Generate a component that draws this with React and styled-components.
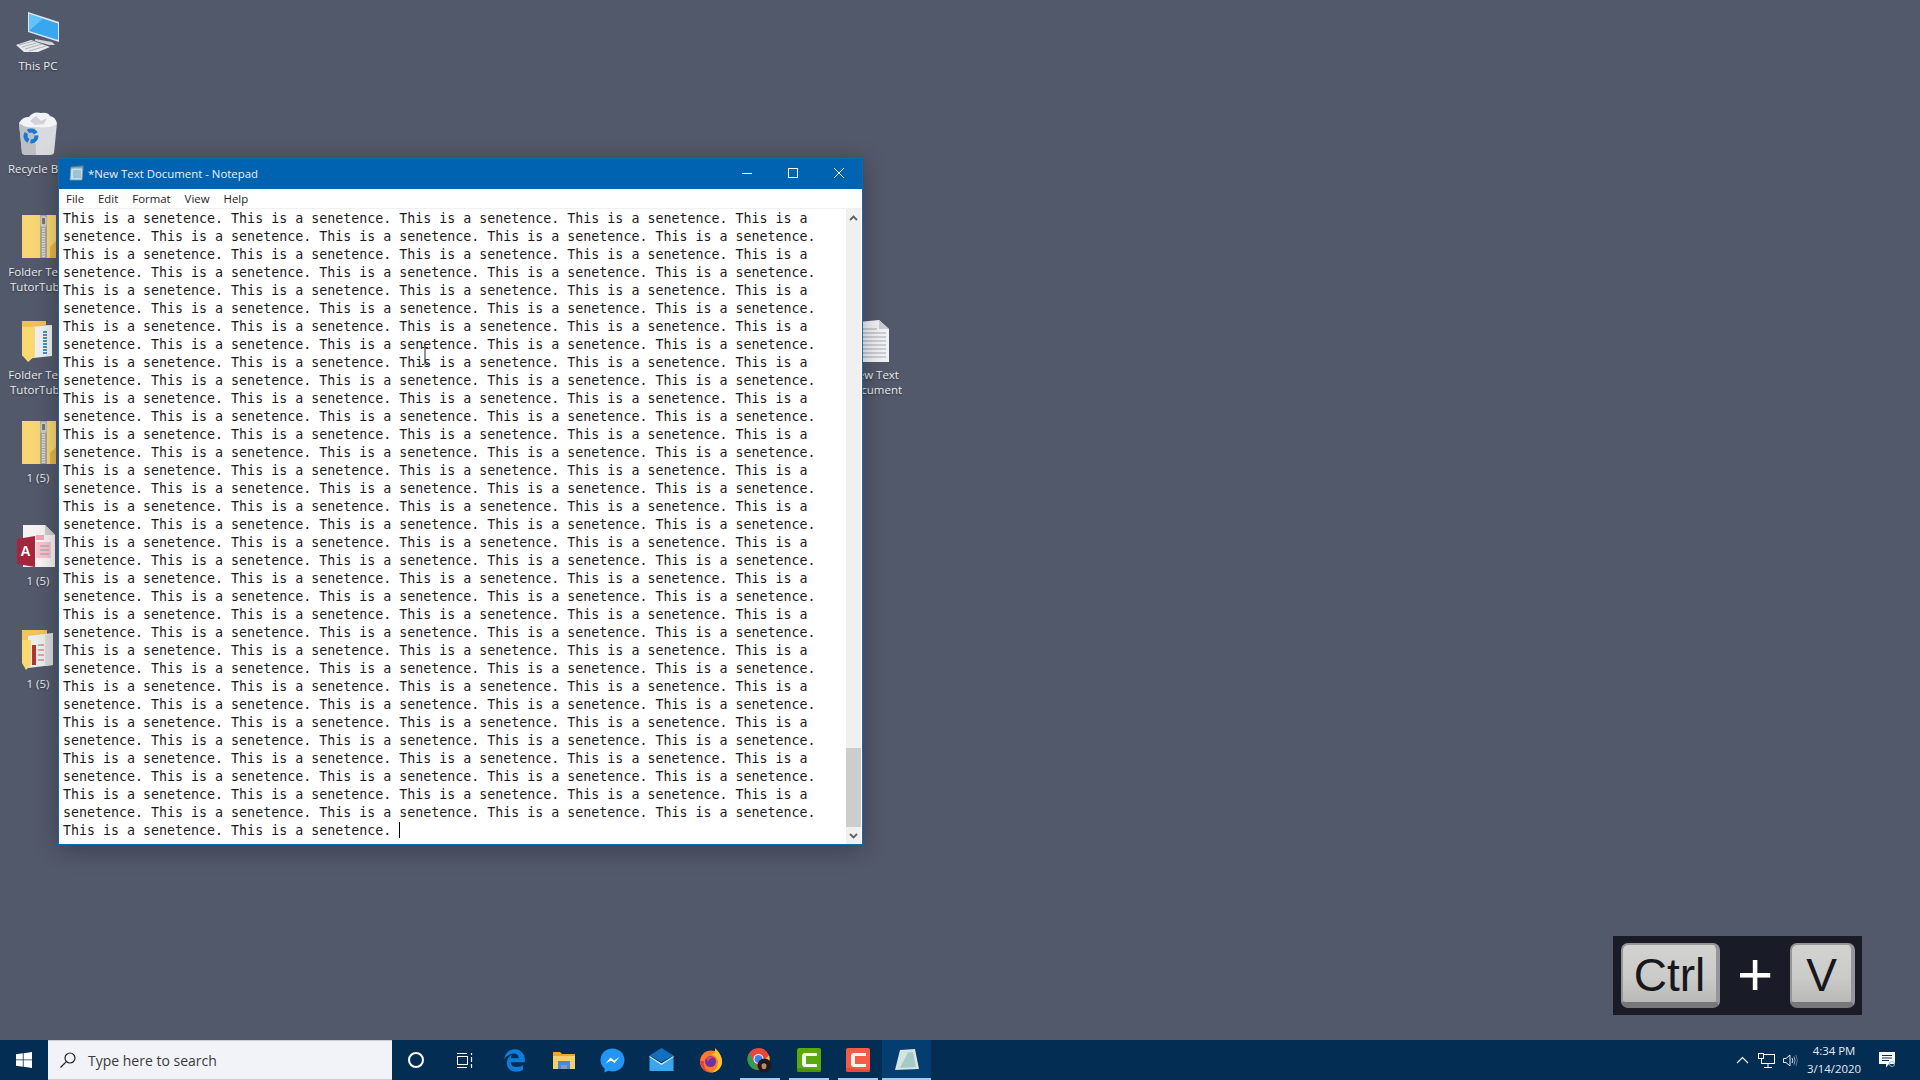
import React from 'react'
import styled, { createGlobalStyle } from 'styled-components'
import { FaEdgeLegacy } from 'react-icons/fa6'

const SENTENCE_LINES = Array.from({ length: 34 }, (_, i) =>
    i % 2 === 0
        ? 'This is a senetence. This is a senetence. This is a senetence. This is a senetence. This is a'
        : 'senetence. This is a senetence. This is a senetence. This is a senetence. This is a senetence.'
)

const ThisPcIcon = () => (
    <svg width="48" height="48" viewBox="0 0 48 48">
        <path d="M14 3 L45 13 L45 33 L14 23 Z" fill="#dfe8f0" />
        <path d="M15 5 L44 14.500 L44 31 L15 22 Z" fill="#38a6f0" />
        <path d="M15 5 L29 9.500 L15 22 Z" fill="#62c4fb" />
        <path d="M21 30 L38 33 L41 36 L35 36 L21 32 Z" fill="#cfd5da" />
        <path d="M2 36 L17 31 L36 38 L24 43 L10 43 Z" fill="#e6e9ed" />
        <path d="M5 36 L20 32 M8 38 L24 33.500 M11 40 L28 35 M15 42 L32 37" stroke="#a5acb5" strokeWidth="0.900" />
    </svg>
)

const RecycleIcon = () => (
    <svg width="48" height="48" viewBox="0 0 48 48">
        <path d="M5 11 L43 11 L40 41 Q39 43 36 43 L13 43 Q9 43 8 41 Z" fill="#d8dadd" />
        <path d="M5 11 L21 11 L22 43 L13 43 Q9 43 8 41 Z" fill="#bcc0c6" />
        <path d="M5 11 Q9 4 15 5 Q19 -1 27 1 Q34 0 36 4 Q42 5 43 12 Q34 17 24 15 Q12 17 5 11 Z" fill="#f1f3f5" />
        <path d="M16 9 L22 4 L27 9 L33 6 L30 12 L21 13 Z" fill="#cfd3d9" />
        <circle cx="17" cy="24" r="5.500" fill="none" stroke="#1878d2" strokeWidth="4" strokeDasharray="9 2" />
    </svg>
)

const ZipFolderIcon = () => (
    <svg width="48" height="48" viewBox="0 0 48 48">
        <path d="M8 0 L42 0 L42 43 L8 43 Z" fill="#f7d673" />
        <path d="M36 32 L36 43 L42 43 L42 26 Z" fill="#e3b649" />
        <rect x="26" y="0" width="7" height="43" fill="#a8a79e" />
        <path d="M29.500 8 L29.500 43" stroke="#dcdad0" strokeWidth="3" strokeDasharray="1.500 1" />
        <rect x="26.500" y="1" width="6" height="11" rx="2" fill="#c9cac9" />
        <rect x="28" y="3" width="3" height="6" fill="#77766f" />
    </svg>
)

const DocFolderIcon = () => (
    <svg width="48" height="48" viewBox="0 0 48 48">
        <path d="M8 3 L32 3 L32 7 L38 7 L38 38 L8 38 Z" fill="#eec15a" />
        <path d="M19 9 L38 7 L38 38 L19 40 Z" fill="#eef1f3" />
        <path d="M31 13 L31 36" stroke="#4b8fc0" strokeWidth="4" strokeDasharray="2 1" />
        <path d="M8 9 L21 9 L21 38 L14 44 L8 37 Z" fill="#fbd970" />
    </svg>
)

const AccessIcon = () => (
    <svg width="48" height="48" viewBox="0 0 48 48">
        <path d="M9 1 L31 1 L41 11 L41 43 L9 43 Z" fill="#f6f3f3" />
        <path d="M31 1 L41 11 L31 11 Z" fill="#d1cdcd" />
        <rect x="22" y="11" width="8" height="5" fill="#f0a6b8" />
        <rect x="22" y="18" width="15" height="16" fill="#f7c4cf" />
        <path d="M26 22 L35 22 M26 26 L35 26 M26 30 L35 30" stroke="#9c9ea4" strokeWidth="1.200" />
        <path d="M3 15 L21 12 L21 43 L3 40 Z" fill="#a4263c" />
        <text x="6.500" y="32" fill="#fff" fontFamily="Liberation Sans, sans-serif" fontWeight="700" fontSize="14">A</text>
    </svg>
)

const MixedFolderIcon = () => (
    <svg width="48" height="48" viewBox="0 0 48 48">
        <path d="M8 3 L33 3 L33 8 L37 8 L37 36 L8 36 Z" fill="#efc55c" />
        <path d="M14 9 L39 6 L39 38 L14 41 Z" fill="#eceded" />
        <path d="M31 8 L39 7 L39 38 L31 39 Z" fill="#dcdcdc" />
        <rect x="18" y="18" width="4" height="20" fill="#b43434" />
        <path d="M24 18 L30 18 M24 23 L30 23 M24 28 L30 28 M24 33 L30 33" stroke="#dba7a7" strokeWidth="2.200" />
        <path d="M8 13 L17 13 L17 38 L12 43 L8 36 Z" fill="#fbd970" />
    </svg>
)

const TextFileIcon = () => (
    <svg width="32" height="44" viewBox="0 0 32 44">
        <path d="M0 2 L21 0 L31 9 L31 42 L0 42 Z" fill="#f0f2f5" />
        <path d="M21 0 L31 9 L21 9 Z" fill="#c9cdd2" />
        <path d="M3 9 L19 9 M3 13 L28 13 M3 17 L28 17 M3 21 L28 21 M3 25 L28 25 M3 29 L28 29 M3 33 L28 33 M3 37 L28 37" stroke="#a5a9af" strokeWidth="1" />
    </svg>
)

const NotepadSmallIcon = () => (
    <svg width="15" height="16" viewBox="0 0 15 16">
        <path d="M2 2 L14 1 L13 15 L1 15 Z" fill="#bfe0ee" stroke="#7c9aa8" strokeWidth="0.800" />
        <path d="M3 1 L3 3.500 M5 1 L5 3.500 M7 1 L7 3.500 M9 1 L9 3.500 M11 1 L11 3.500 M13 1 L13 3.500" stroke="#4a5c68" strokeWidth="0.900" />
        <path d="M4 6 L12 6 M4 8 L12 8 M4 10 L12 10 M4 12 L12 12" stroke="#6f98ad" strokeWidth="0.800" />
    </svg>
)

const MinimizeGlyph = () => (
    <svg width="10" height="10" viewBox="0 0 10 10">
        <path d="M0 5.500 L10 5.500" stroke="#fff" strokeWidth="1" />
    </svg>
)

const MaximizeGlyph = () => (
    <svg width="10" height="10" viewBox="0 0 10 10">
        <rect x="0.500" y="0.500" width="9" height="9" fill="none" stroke="#fff" strokeWidth="1" />
    </svg>
)

const CloseGlyph = () => (
    <svg width="10" height="10" viewBox="0 0 10 10">
        <path d="M0 0 L10 10 M10 0 L0 10" stroke="#fff" strokeWidth="1" />
    </svg>
)

const Chevron = ({ up }) => (
    <svg width="9" height="6" viewBox="0 0 9 6">
        <path d={up ? 'M1 5 L4.500 1.500 L8 5' : 'M1 1 L4.500 4.500 L8 1'} fill="none" stroke="#606060" strokeWidth="1.800" />
    </svg>
)

const WindowsLogo = () => (
    <svg width="16" height="16" viewBox="0 0 16 16">
        <path d="M0 2.200 L6.800 1.300 L6.800 7.500 L0 7.500 Z M7.600 1.200 L16 0 L16 7.500 L7.600 7.500 Z M0 8.300 L6.800 8.300 L6.800 14.700 L0 13.800 Z M7.600 8.300 L16 8.300 L16 16 L7.600 14.800 Z" fill="#fff" />
    </svg>
)

const SearchGlyph = () => (
    <svg width="16" height="16" viewBox="0 0 16 16">
        <circle cx="10" cy="6" r="5" fill="none" stroke="#222" strokeWidth="1.200" />
        <path d="M6.300 9.700 L0.500 15.500" stroke="#222" strokeWidth="1.200" />
    </svg>
)

const TaskViewGlyph = () => (
    <svg width="17" height="15" viewBox="0 0 17 15">
        <path d="M1 0.500 L11 0.500 M1 14.500 L11 14.500" stroke="#fff" strokeWidth="1" />
        <rect x="1.500" y="3.500" width="10" height="8" fill="none" stroke="#fff" strokeWidth="1" />
        <path d="M15.500 0 L15.500 2 M15.500 4 L15.500 9 M15.500 11 L15.500 15" stroke="#fff" strokeWidth="1.200" />
    </svg>
)

const ExplorerIcon = () => (
    <svg width="22" height="20" viewBox="0 0 22 20">
        <path d="M0 2 L7 2 L9 4 L22 4 L22 7 L0 7 Z" fill="#e9a92e" />
        <rect y="6" width="22" height="13" fill="#f7d06a" />
        <path d="M5 19 L5 11 L17 11 L17 19 L14 19 L14 15 L8 15 L8 19 Z" fill="#3e8fd3" />
        <rect x="8" y="15" width="6" height="4" fill="#8e9aa8" />
    </svg>
)

const MessengerIcon = () => (
    <svg width="25" height="25" viewBox="0 0 25 25">
        <path d="M12.500 0.500 C5.700 0.500 0.500 5.500 0.500 12 C0.500 15.500 2 18.500 4.500 20.500 L4.500 24.500 L8.300 22.700 C9.600 23.200 11 23.500 12.500 23.500 C19.300 23.500 24.500 18.500 24.500 12 C24.500 5.500 19.300 0.500 12.500 0.500 Z" fill="#2396f5" />
        <path d="M5.500 15.500 L10.500 9.500 L14 12.500 L19.500 9 L14.500 15 L11 12.500 Z" fill="#fff" />
    </svg>
)

const MailIcon = () => (
    <svg width="25" height="24" viewBox="0 0 25 24">
        <path d="M0.500 7.500 L12.500 0 L24.500 7.500 L12.500 14 Z" fill="#1170bd" />
        <path d="M0.500 8 L12.500 15.500 L24.500 8 L24.500 23 L0.500 23 Z" fill="#3aa6ec" />
        <path d="M0.500 8 L12.500 15.500 L24.500 8 L24.500 9 L12.500 17 L0.500 9 Z" fill="#d8eefb" />
    </svg>
)

const FirefoxIcon = () => (
    <svg width="24" height="26" viewBox="0 0 24 26">
        <circle cx="12" cy="14.500" r="11" fill="#ff7a29" />
        <path d="M12 25.500 C18 25.500 23 20.500 23 14.500 C23 9 20 5 16 1 C16.500 5 15 7 12 8 C16 8 19 11 19 15 C19 20 15 25 12 25.500 Z" fill="#ffc42e" />
        <circle cx="11.500" cy="14.500" r="5.500" fill="#6b32a8" />
        <path d="M7 11 C9 9 13 9 15 10.500 C12 10.500 10 12 9 15 Z" fill="#e8445a" />
        <path d="M1 14 C2 21 7 25.500 12 25.500 C7 24 4 20 5 14 Z" fill="#f0374c" />
    </svg>
)

const ChromeIcon = () => (
    <svg width="26" height="26" viewBox="0 0 26 26">
        <circle cx="11.500" cy="12" r="11" fill="#e8483b" />
        <path d="M2 6.500 L7 15 L11.500 23 A11 11 0 0 1 2 6.500 Z" fill="#2ba14b" />
        <path d="M11.500 23 L17 13 L22 8.500 A11 11 0 0 1 11.500 23 Z" fill="#f7c52e" />
        <circle cx="11.500" cy="12" r="5" fill="#fff" />
        <circle cx="11.500" cy="12" r="4" fill="#3e82ee" />
        <circle cx="17.500" cy="18.500" r="7" fill="#1d1a20" />
        <ellipse cx="17" cy="19" rx="2.400" ry="3.200" fill="#b98a72" />
        <path d="M14 17 Q17 12.500 20.500 17 Q17 15.500 14 17 Z" fill="#050505" />
    </svg>
)

const CamtasiaIcon = ({ $color, $dark }) => (
    <svg width="24" height="24" viewBox="0 0 24 24">
        <rect width="24" height="24" rx="2" fill={$color} />
        <path d="M20 5 L7 5 L5 7 L5 17 L7 19 L20 19 L20 16 L9 16 L9 8 L20 8 Z" fill="#f4f7ef" />
        <path d="M0 20 L0 22 Q0 24 2 24 L22 24 Q24 24 24 22 Z" fill={$dark} />
    </svg>
)

const NotepadIcon = () => (
    <svg width="24" height="24" viewBox="0 0 24 24">
        <path d="M5 2 L20 1 L24 21 L0 22 Z" fill="#d9e4e6" />
        <path d="M7 5 L18 4 L21 19 L3 20 Z" fill="#a5c9c4" />
        <path d="M7 5 L13 4.500 L5 20 L3 20 Z" fill="#d3e6e2" />
    </svg>
)

const TrayCaret = () => (
    <svg width="13" height="8" viewBox="0 0 13 8">
        <path d="M1 7 L6.500 1.500 L12 7" fill="none" stroke="#fff" strokeWidth="1.100" />
    </svg>
)

const NetworkGlyph = () => (
    <svg width="17" height="15" viewBox="0 0 17 15">
        <rect x="3.500" y="1.500" width="13" height="9" fill="none" stroke="#fff" />
        <rect x="0.500" y="0.500" width="5" height="5" fill="#0a3159" stroke="#fff" />
        <path d="M10 11 L10 14 M6 14.500 L14 14.500" stroke="#fff" />
    </svg>
)

const VolumeGlyph = () => (
    <svg width="15" height="13" viewBox="0 0 15 13">
        <path d="M0.500 4.500 L3 4.500 L7 1 L7 12 L3 8.500 L0.500 8.500 Z" fill="none" stroke="#fff" strokeWidth="0.900" />
        <path d="M9 4 Q10.500 6.500 9 9" fill="none" stroke="#fff" strokeWidth="0.900" />
        <path d="M11 2.500 Q13 6.500 11 10.500" fill="none" stroke="#c6d3df" strokeWidth="0.800" />
        <path d="M13 1 Q15.500 6.500 13 12" fill="none" stroke="#6e86a0" strokeWidth="0.800" />
    </svg>
)

const NotificationGlyph = () => (
    <svg width="17" height="16" viewBox="0 0 17 16">
        <path d="M0 0 L16 0 L16 12 L10 12 L7 15.500 L7 12 L0 12 Z" fill="#fff" />
        <path d="M3 3.500 L13 3.500 M3 6 L13 6 M3 8.500 L10 8.500" stroke="#0a3159" />
        <circle cx="13" cy="12" r="2.500" fill="none" stroke="#9ab2c8" />
    </svg>
)

const IBeam = () => (
    <svg width="8" height="18" viewBox="0 0 8 18">
        <path d="M1 0.500 L3 0.500 L4 1.500 L5 0.500 L7 0.500 M4 1.500 L4 16.500 M1 17.500 L3 17.500 L4 16.500 L5 17.500 L7 17.500" fill="none" stroke="#222" />
    </svg>
)

const desktopItems = [
    { label: ['This PC'], icon: <ThisPcIcon /> },
    { label: ['Recycle Bin'], icon: <RecycleIcon /> },
    { label: ['Folder Test', 'TutorTube'], icon: <ZipFolderIcon /> },
    { label: ['Folder Test', 'TutorTube'], icon: <DocFolderIcon /> },
    { label: ['1 (5)'], icon: <ZipFolderIcon /> },
    { label: ['1 (5)'], icon: <AccessIcon /> },
    { label: ['1 (5)'], icon: <MixedFolderIcon /> },
]

const taskbarApps = [
    { key: 'edge', icon: <FaEdgeLegacy size={23} color="#0f7dd8" /> },
    { key: 'explorer', icon: <ExplorerIcon /> },
    { key: 'messenger', icon: <MessengerIcon /> },
    { key: 'mail', icon: <MailIcon /> },
    { key: 'firefox', icon: <FirefoxIcon /> },
    { key: 'chrome', icon: <ChromeIcon />, running: true },
    { key: 'camtasia', icon: <CamtasiaIcon $color="#5aa90e" $dark="#4a920a" />, running: true },
    { key: 'recorder', icon: <CamtasiaIcon $color="#f55b46" $dark="#e24c38" />, running: true },
    { key: 'notepad', icon: <NotepadIcon />, running: true, active: true },
]

const App = () => (
    <>
        <GlobalStyle />
        <Screen>
            <Desktop>
                <IconColumn>
                    {desktopItems.map((item, index) => (
                        <DesktopIcon key={index}>
                            <IconSlot>{item.icon}</IconSlot>
                            {item.label.map(line => (
                                <IconLabel key={line}>{line}</IconLabel>
                            ))}
                        </DesktopIcon>
                    ))}
                </IconColumn>

                <FreeIcon>
                    <IconSlot>
                        <TextFileIcon />
                    </IconSlot>
                    <IconLabel>New Text</IconLabel>
                    <IconLabel>Document</IconLabel>
                </FreeIcon>

                <NotepadWindow>
                    <TitleBar>
                        <NotepadSmallIcon />
                        <TitleText>*New Text Document - Notepad</TitleText>
                        <WindowButton>
                            <MinimizeGlyph />
                        </WindowButton>
                        <WindowButton>
                            <MaximizeGlyph />
                        </WindowButton>
                        <WindowButton>
                            <CloseGlyph />
                        </WindowButton>
                    </TitleBar>
                    <MenuBar>
                        <MenuItem>File</MenuItem>
                        <MenuItem>Edit</MenuItem>
                        <MenuItem>Format</MenuItem>
                        <MenuItem>View</MenuItem>
                        <MenuItem>Help</MenuItem>
                    </MenuBar>
                    <EditorArea>
                        <Editor>
                            {SENTENCE_LINES.map((line, index) => (
                                <EditorLine key={index}>{line}</EditorLine>
                            ))}
                            <EditorLine>
                                This is a senetence. This is a senetence. <Caret />
                            </EditorLine>
                            <MousePointer>
                                <IBeam />
                            </MousePointer>
                        </Editor>
                        <ScrollBar>
                            <ScrollArrow>
                                <Chevron up />
                            </ScrollArrow>
                            <ScrollTrack>
                                <ScrollThumb />
                            </ScrollTrack>
                            <ScrollArrow>
                                <Chevron />
                            </ScrollArrow>
                        </ScrollBar>
                    </EditorArea>
                </NotepadWindow>

                <KeyOverlay>
                    <KeyCap $wide>Ctrl</KeyCap>
                    <PlusSign>+</PlusSign>
                    <KeyCap>V</KeyCap>
                </KeyOverlay>
            </Desktop>

            <Taskbar>
                <StartButton>
                    <WindowsLogo />
                </StartButton>
                <SearchBox>
                    <SearchGlyph />
                    <SearchText>Type here to search</SearchText>
                </SearchBox>
                <ShellButton>
                    <CortanaRing />
                </ShellButton>
                <ShellButton>
                    <TaskViewGlyph />
                </ShellButton>
                <AppStrip>
                    {taskbarApps.map(app => (
                        <AppButton key={app.key} $running={app.running} $active={app.active}>
                            {app.icon}
                        </AppButton>
                    ))}
                </AppStrip>
                <Tray>
                    <TrayIcon>
                        <TrayCaret />
                    </TrayIcon>
                    <TrayIcon>
                        <NetworkGlyph />
                    </TrayIcon>
                    <TrayIcon>
                        <VolumeGlyph />
                    </TrayIcon>
                    <Clock>
                        <span>4:34 PM</span>
                        <span>3/14/2020</span>
                    </Clock>
                    <NotificationButton>
                        <NotificationGlyph />
                    </NotificationButton>
                </Tray>
            </Taskbar>
        </Screen>
    </>
)

const GlobalStyle = createGlobalStyle`
    html, body {
        margin: 0;
        padding: 0;
        background: #52596b;
        overflow: hidden;
    }
`

const Screen = styled.div`
    width: 1920px;
    height: 1080px;
    display: flex;
    flex-direction: column;
    font-family: 'Open Sans', 'Noto Sans', sans-serif;
    overflow: hidden;
`

const Desktop = styled.div`
    position: relative;
    flex: 1;
    background: #52596b;
`

const IconColumn = styled.div`
    width: 76px;
    display: flex;
    flex-direction: column;
    padding-top: 9px;
`

const DesktopIcon = styled.div`
    height: 103px;
    display: flex;
    flex-direction: column;
    align-items: center;
`

const FreeIcon = styled(DesktopIcon)`
    position: absolute;
    left: 836px;
    top: 318px;
    width: 76px;
`

const IconSlot = styled.div`
    height: 48px;
    display: flex;
    align-items: center;
    justify-content: center;
    margin-bottom: 2px;
`

const IconLabel = styled.div`
    font-size: 11.500px;
    line-height: 14.500px;
    color: #e9ebef;
    white-space: nowrap;
    text-shadow: 0 1px 2px rgba(0, 0, 0, 0.45);
`

const NotepadWindow = styled.div`
    position: absolute;
    left: 58px;
    top: 158px;
    width: 805px;
    height: 687px;
    display: flex;
    flex-direction: column;
    box-sizing: border-box;
    border: 1px solid #0f6aa8;
    background: #fff;
    box-shadow: 0 4px 22px rgba(0, 0, 0, 0.3);
`

const TitleBar = styled.div`
    height: 30px;
    flex: none;
    box-sizing: border-box;
    display: flex;
    align-items: center;
    padding: 0 0 2px 10px;
    background: #0063b1;
`

const TitleText = styled.div`
    flex: 1;
    margin-left: 4px;
    font-size: 11.400px;
    color: #e8f1f8;
`

const WindowButton = styled.div`
    width: 46px;
    height: 28px;
    display: flex;
    align-items: center;
    justify-content: center;
`

const MenuBar = styled.div`
    height: 20px;
    flex: none;
    box-sizing: border-box;
    display: flex;
    align-items: center;
    padding-left: 7px;
    gap: 14px;
    border-bottom: 1px solid #f0f0f0;
`

const MenuItem = styled.div`
    font-size: 11.400px;
    color: #1e1e1e;
`

const EditorArea = styled.div`
    flex: 1;
    display: flex;
    min-height: 0;
`

const Editor = styled.div`
    position: relative;
    flex: 1;
    padding: 1px 0 0 4px;
    overflow: hidden;
    font-family: 'DejaVu Sans Mono', 'Liberation Mono', monospace;
    font-size: 13.300px;
    line-height: 18px;
    color: #1a1a1a;
`

const EditorLine = styled.div`
    height: 18px;
    white-space: pre;
`

const Caret = styled.span`
    display: inline-block;
    width: 1px;
    height: 16px;
    vertical-align: -3px;
    background: #000;
`

const MousePointer = styled.div`
    position: absolute;
    left: 362px;
    top: 138px;
    line-height: 0;
`

const ScrollBar = styled.div`
    width: 15px;
    margin-right: 1px;
    display: flex;
    flex-direction: column;
    background: #f0f0f0;
`

const ScrollArrow = styled.div`
    height: 17px;
    flex: none;
    display: flex;
    align-items: center;
    justify-content: center;
`

const ScrollTrack = styled.div`
    flex: 1;
    display: flex;
    flex-direction: column;
    justify-content: flex-end;
`

const ScrollThumb = styled.div`
    height: 79px;
    background: #cdcdcd;
`

const KeyOverlay = styled.div`
    position: absolute;
    left: 1613px;
    top: 936px;
    width: 249px;
    height: 79px;
    box-sizing: border-box;
    padding: 7px 7px 7px 8px;
    display: flex;
    align-items: center;
    background: #191c26;
`

const KeyCap = styled.div`
    width: ${props => (props.$wide ? '99px' : '65px')};
    height: 65px;
    box-sizing: border-box;
    display: flex;
    align-items: center;
    justify-content: center;
    padding-top: 3px;
    border-radius: 7px;
    background: linear-gradient(180deg, #d2d2d0 0%, #cbcbc9 55%, #b9b9b7 100%);
    border: 2px solid #96969a;
    border-bottom: 6px solid #77777a;
    border-right-width: 4px;
    font-family: 'Liberation Sans', Arial, sans-serif;
    font-size: 46px;
    color: #17171c;
`

const PlusSign = styled.div`
    flex: 1;
    text-align: center;
    font-family: 'Liberation Sans', Arial, sans-serif;
    font-size: 62px;
    line-height: 1;
    padding-bottom: 3px;
    color: #fff;
`

const Taskbar = styled.div`
    height: 40px;
    flex: none;
    display: flex;
    align-items: stretch;
    background: #032d52;
`

const StartButton = styled.div`
    width: 48px;
    display: flex;
    align-items: center;
    justify-content: center;
`

const SearchBox = styled.div`
    width: 344px;
    box-sizing: border-box;
    display: flex;
    align-items: center;
    gap: 12px;
    padding-left: 12px;
    background: #f2f3f8;
    border: 1px solid #c8ccd4;
    border-width: 1px 0;
`

const SearchText = styled.div`
    font-size: 14px;
    color: #3a3a3a;
`

const ShellButton = styled.div`
    width: 48px;
    display: flex;
    align-items: center;
    justify-content: center;
`

const CortanaRing = styled.div`
    width: 16px;
    height: 16px;
    box-sizing: border-box;
    border: 2px solid #fff;
    border-radius: 50%;
`

const AppStrip = styled.div`
    display: flex;
    margin-left: 2px;
`

const AppButton = styled.div`
    position: relative;
    width: 49px;
    display: flex;
    align-items: center;
    justify-content: center;
    background: ${props => (props.$active ? '#043d70' : 'transparent')};

    &::after {
        content: '';
        display: ${props => (props.$running ? 'block' : 'none')};
        position: absolute;
        left: ${props => (props.$active ? '0' : '5px')};
        right: ${props => (props.$active ? '0' : '4px')};
        bottom: 0;
        height: 2px;
        background: #a0cdf0;
    }
`

const Tray = styled.div`
    margin-left: auto;
    display: flex;
    align-items: center;
`

const TrayIcon = styled.div`
    width: 24px;
    display: flex;
    align-items: center;
    justify-content: center;
`

const Clock = styled.div`
    width: 64px;
    margin-right: 6px;
    display: flex;
    flex-direction: column;
    align-items: center;
    font-size: 11.400px;
    line-height: 18px;
    color: #e4ebf2;
`

const NotificationButton = styled.div`
    width: 48px;
    display: flex;
    align-items: center;
    justify-content: center;
    box-sizing: border-box;
    padding-right: 18px;
`

export default App
